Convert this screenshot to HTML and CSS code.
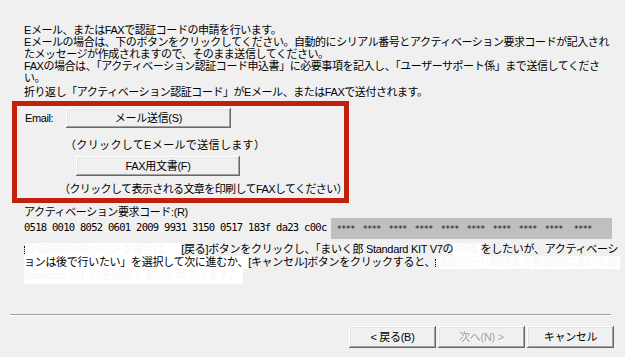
FILE: index.html
```html
<!DOCTYPE html>
<html lang="ja">
<head>
<meta charset="utf-8">
<title>アクティベーション</title>
<link rel="stylesheet" href="styles.css">
</head>
<body>
<div class="page">
  <div class="intro">
    <p>Eメール、またはFAXで認証コードの申請を行います。</p>
    <p>Eメールの場合は、下のボタンをクリックしてください。自動的にシリアル番号とアクティベーション要求コードが記入され<br>たメッセージが作成されますので、そのまま送信してください。</p>
    <p>FAXの場合は、「アクティベーション認証コード申込書」に必要事項を記入し、「ユーザーサポート係」まで送信してくださ<br>い。</p>
    <p class="last">折り返し「アクティベーション認証コード」がEメール、またはFAXで送付されます。</p>
  </div>

  <div class="redbox">
    <div class="email-row">
      <span class="email-label">Email:</span>
      <button class="btn btn-mail">メール送信(S)</button>
    </div>
    <div class="note note-mail">（クリックしてEメールで送信します）</div>
    <button class="btn btn-fax">FAX用文書(F)</button>
    <div class="note note-fax">（クリックして表示される文章を印刷してFAXしてください）</div>
  </div>

  <div class="code-label">アクティベーション要求コード:(R)</div>
  <div class="code-row">
    <span class="code">0518 0010 8052 0601 2009 9931 3150 0517 183f da23 c00c</span>
    <div class="mask">
      <span>****</span><span>****</span><span>****</span><span>****</span><span>****</span><span>****</span><span>****</span><span>****</span><span>****</span><span class="wide">****</span>
    </div>
  </div>

  <div class="info">
    <div class="line"><span class="caret"></span><span class="hid hid-a">評価期間が残っている場合は、</span>[戻る]ボタンをクリックし、「まいく郎 Standard KIT V7の<span class="hid hid-b">評価</span>をしたいが、アクティベーシ</div>
    <div class="line"><span class="hid lit">ョンは後で行いたい」を選択して次に進むか、</span>[キャンセル]ボタンをクリックすると、<span class="caret"></span><span class="hid hid-c">認証コード取得まで暫定的にまいく郎</span></div>
    <div class="line"><span class="hid hid-d">Standard KIT V7を使用することができます。</span></div>
  </div>

  <div class="sep"></div>

  <div class="nav">
    <button class="btn nav-btn">&lt; 戻る(B)</button>
    <button class="btn nav-btn disabled">次へ(N) &gt;</button>
    <button class="btn nav-btn">キャンセル</button>
  </div>
</div>
</body>
</html>
```

FILE: styles.css
```css
html, body {
  margin: 0;
  padding: 0;
  background: #f0f0f0;
}
body {
  width: 625px;
  height: 357px;
  overflow: hidden;
  font-family: "Liberation Sans", "Noto Sans CJK JP", sans-serif;
  font-size: 11px;
  color: #000;
  letter-spacing: -0.4px;
}
.page {
  padding-top: 24px;
}
.intro {
  margin-left: 24px;
  line-height: 12px;
  letter-spacing: -0.45px;
}
.intro p {
  margin: 0;
  white-space: nowrap;
}
.intro p.last {
  margin-top: 2px;
}

.redbox {
  box-sizing: border-box;
  margin: 3px 0 0 12px;
  width: 337px;
  height: 102px;
  border: 5px solid #c1200d;
  padding: 2px 0 0 8px;
  line-height: 12px;
}
.email-row {
  display: flex;
  align-items: center;
}
.email-label {
  width: 41px;
}
.btn {
  font-family: inherit;
  font-size: 11px;
  letter-spacing: -0.3px;
  color: #000;
  background: #f0f0f0;
  border: none;
  padding: 0;
  margin: 0;
  box-shadow: inset -1px -1px #696969, inset 1px 1px #ffffff, inset -2px -2px #a0a0a0, inset 2px 2px #e3e3e3;
  line-height: 12px;
}
.btn-mail {
  width: 165px;
  height: 20px;
}
.note {
  white-space: nowrap;
}
.note-mail {
  margin: 11px 0 0 40px;
  letter-spacing: 0.35px;
}
.btn-fax {
  display: block;
  width: 164px;
  height: 20px;
  margin: 5px 0 0 51px;
}
.note-fax {
  margin: 7px 0 0 34px;
  letter-spacing: -0.6px;
}

.code-label {
  margin: 3px 0 0 24px;
  line-height: 12px;
}
.code-row {
  display: flex;
  align-items: flex-start;
  margin-left: 24px;
}
.code {
  font-family: "DejaVu Sans Mono", monospace;
  font-size: 10.5px;
  letter-spacing: -0.72px;
  line-height: 12px;
  margin-top: 3px;
  width: 307px;
  white-space: nowrap;
}
.mask {
  display: flex;
  align-items: center;
  width: 281px;
  height: 21px;
  background: #bfbfbf;
  padding-left: 6px;
  box-sizing: border-box;
  font-family: "DejaVu Sans", sans-serif;
  font-size: 9px;
  letter-spacing: 0;
  color: #202020;
}
.mask span {
  width: 26px;
}
.mask span.wide {
  margin-left: 3px;
}

.info {
  margin: 4px 0 0 24px;
  line-height: 13px;
  white-space: nowrap;
  letter-spacing: -0.3px;
}
.line {
  height: 13px;
}
.hid {
  display: inline-block;
  height: 13px;
  vertical-align: top;
  background: #ffffff;
  color: #f7f7f7;
}
.hid.lit {
  color: #000;
}
.hid-a {
  padding-right: 7px;
}
.hid-b {
  padding: 0 3px;
}
.hid-c {
  padding-right: 2px;
}
.hid-d {
  height: 15px;
  padding-right: 4px;
}
.caret {
  display: inline-block;
  width: 0;
  height: 8px;
  border-left: 1px dotted #000;
  vertical-align: -1px;
}

.sep {
  margin: 32px 14px 0 10px;
  height: 1px;
  background: #a0a0a0;
  border-bottom: 1px solid #ffffff;
}
.nav {
  display: flex;
  justify-content: flex-end;
  gap: 2px;
  margin-top: 10px;
  padding-right: 11px;
}
.nav-btn {
  width: 87px;
  height: 22px;
}
.nav-btn.disabled {
  color: #a0a0a0;
  text-shadow: 1px 1px #ffffff;
}
```
